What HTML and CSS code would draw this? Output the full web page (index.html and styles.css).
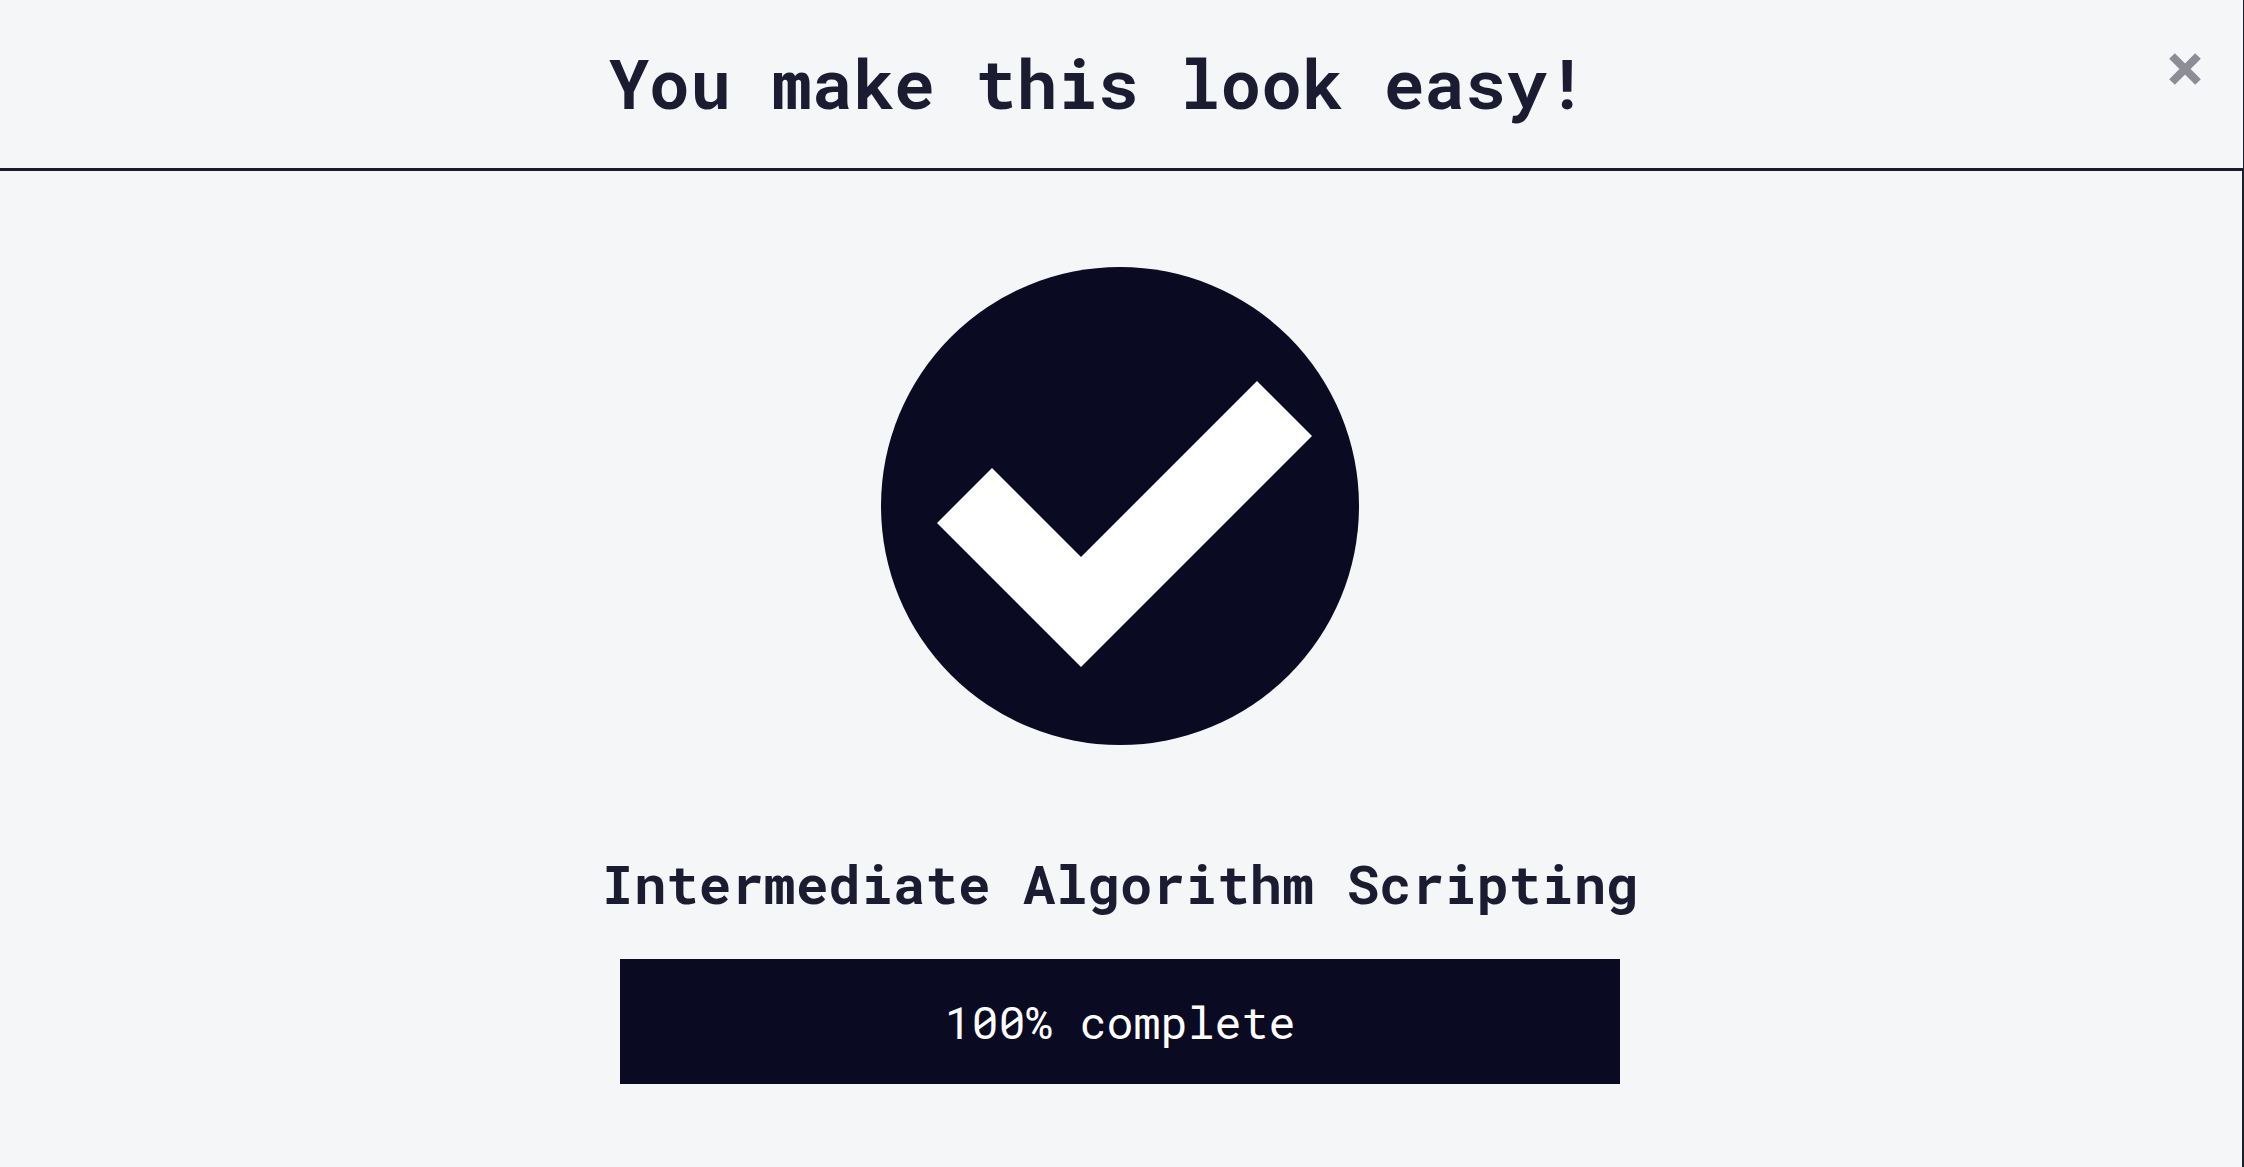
FILE: index.html
```html
<!DOCTYPE html>
<html lang="en">
<head>
<meta charset="utf-8">
<title>Block complete</title>
<link rel="stylesheet" href="styles.css">
</head>
<body>
<main class="modal">
<header class="modal-header">
<h1 class="modal-title">You make this look easy!</h1>
<button class="close" type="button" aria-label="Close"><svg class="close-icon" viewBox="0 0 34 34" aria-hidden="true"><path d="M4 4L30 30M30 4L4 30"/></svg></button>
</header>
<section class="modal-body">
<svg class="check" viewBox="0 0 478 478" role="img" aria-label="Passed"><circle cx="239" cy="239" r="239"/><path d="M56 256L111 201L200 290L376 114L431 169L200 400Z"/></svg>
<h2 class="block-name">Intermediate Algorithm Scripting</h2>
<div class="progress">100% complete</div>
</section>
</main>
</body>
</html>
```
FILE: styles.css
```css
* {
  box-sizing: border-box;
}

body {
  margin: 0;
  background: #f5f6f7;
  color: #1b1b32;
  font-family: "Roboto Mono", "DejaVu Sans Mono", "Liberation Mono", monospace;
}

.modal {
  display: flex;
  flex-direction: column;
  min-height: 100vh;
}

.modal-header {
  position: relative;
  display: flex;
  justify-content: center;
  padding: 39px 97px 41px 50px;
  border-right: 1px solid #1b1b32;
  border-bottom: 3px solid #1b1b32;
}

.modal-title {
  margin: 0;
  font-size: 68px;
  line-height: 88px;
}

.close {
  position: absolute;
  top: 52px;
  right: 41px;
  padding: 0;
  border: 0;
  background: none;
}

.close-icon {
  display: block;
  width: 34px;
  height: 34px;
  stroke: #8d8d98;
  stroke-width: 8px;
}

.modal-body {
  display: flex;
  flex: 1;
  flex-direction: column;
  align-items: center;
  padding: 96px 2px 40px 0;
  border-right: 2px solid #1b1b32;
}

.check {
  width: 478px;
  height: 478px;
  fill: #0a0a23;
}

.check path {
  fill: #fff;
}

.block-name {
  margin: 101px 0 39px;
  font-size: 54px;
  line-height: 74px;
}

.progress {
  width: 1000px;
  max-width: 100%;
  padding: 32px;
  background: #0a0a23;
  color: #fff;
  font-size: 45px;
  line-height: 61px;
  text-align: center;
}
```
